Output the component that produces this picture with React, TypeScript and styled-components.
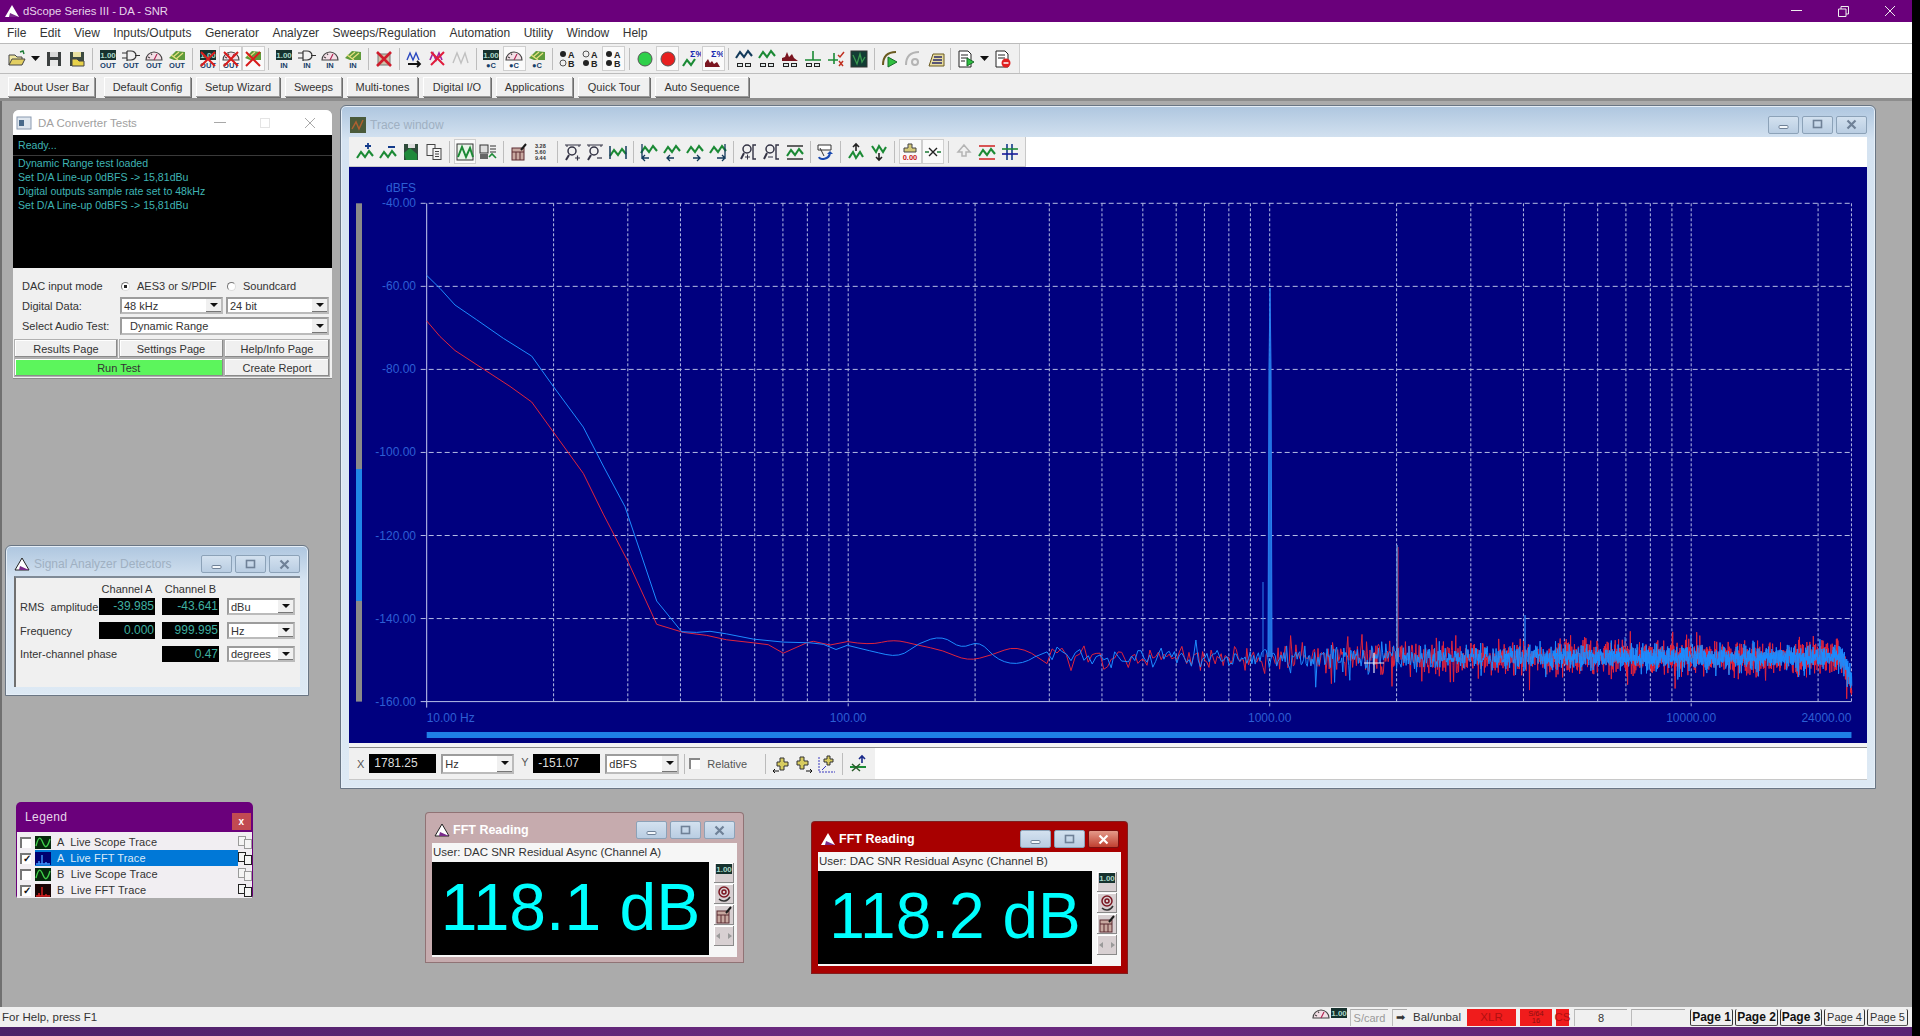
import React from "react";
import styled, { createGlobalStyle } from "styled-components";

const GlobalStyle = createGlobalStyle`
  html, body { margin: 0; padding: 0; background: #000; }
  body { font-family: "Liberation Sans", Arial, sans-serif; font-size: 12px; color: #222; }
  * { box-sizing: border-box; }
`;

const Screen = styled.div`
  width: 1912px;
  height: 1036px;
  display: flex;
  flex-direction: column;
  overflow: hidden;
`;

const TitleBar = styled.div`
  height: 22px;
  flex: none;
  background: #6a007b;
  color: #e6d4ea;
  display: flex;
  align-items: center;
  padding-left: 4px;
  gap: 3px;
  font-size: 11.3px;
`;

const TitleText = styled.span`
  flex: 1;
`;

const SysButton = styled.div`
  width: 44px;
  height: 22px;
  display: flex;
  align-items: center;
  justify-content: center;
`;

const MenuBar = styled.div`
  height: 22px;
  flex: none;
  background: #fff;
  border-bottom: 1px solid #bbb;
  display: flex;
  align-items: center;
  padding-left: 7px;
  gap: 13.5px;
  color: #333;
`;

const MainToolbarRow = styled.div`
  height: 30px;
  flex: none;
  background: #fff;
  border-bottom: 1px solid #bdbdbd;
  display: flex;
`;

const ToolGroup = styled.div<{ $pad: number }>`
  display: flex;
  align-items: center;
  height: 100%;
  background: #f0f0f0;
  padding: 0 4px 0 ${({ $pad }) => $pad}px;
  border-right: 1px solid #d0d0d0;
`;

const ToolButton = styled.div<{ $on?: boolean; $narrow?: boolean }>`
  width: ${({ $narrow }) => ($narrow ? 14 : 22.9)}px;
  height: 25px;
  flex: none;
  display: flex;
  align-items: center;
  justify-content: center;
  background: ${({ $on }) => ($on ? "#fafafa" : "transparent")};
  box-shadow: ${({ $on }) => ($on ? "inset 0 0 0 1px #cfcfcf" : "none")};
`;

const ToolSep = styled.div`
  width: 1px;
  height: 22px;
  margin: 0 3.5px;
  flex: none;
  background: #bdbdbd;
`;

const UserBar = styled.div`
  height: 27px;
  flex: none;
  background: #f0f0f0;
  border-bottom: 3px solid #8d8d8d;
  display: flex;
  align-items: center;
  padding: 2px 0 0 8px;
  gap: 5px;
`;

const UserButton = styled.div<{ $w: number }>`
  width: ${({ $w }) => $w}px;
  height: 20px;
  display: flex;
  align-items: center;
  justify-content: center;
  font-size: 11px;
  color: #333;
  background: #f0f0f0;
  box-shadow: inset -1px -1px #9a9a9a, inset 1px 1px #fff, 1px 1px 0 #6e6e6e;

  &:first-child {
    margin-right: 4px;
  }
`;

const Workspace = styled.div`
  position: relative;
  flex: 1;
  background: #ababab;
  box-shadow: inset 2px 0 #707070;
`;

const Desk = styled.div<{ $x: number; $y: number; $w: number; $h: number }>`
  position: absolute;
  left: ${({ $x }) => $x}px;
  top: ${({ $y }) => $y}px;
  width: ${({ $w }) => $w}px;
  height: ${({ $h }) => $h}px;
  display: flex;
  flex-direction: column;
`;

/* DA Converter Tests */
const FlatWindow = styled(Desk)`
  background: #f0f0f0;
  border-radius: 6px 6px 0 0;
  box-shadow: 0 1px 0 #8a8a8a;
`;

const FlatTitle = styled.div`
  height: 25px;
  flex: none;
  background: #fff;
  border-radius: 6px 6px 0 0;
  display: flex;
  align-items: center;
  padding-left: 3px;
  gap: 6px;
  color: #a0a0a0;
  font-size: 11.5px;
`;

const FlatControls = styled.div`
  margin-left: auto;
  display: flex;
  align-items: center;
  color: #a8a8a8;
`;

const FlatControl = styled.div`
  width: 45px;
  display: flex;
  justify-content: center;
`;

const Console = styled.div`
  height: 133px;
  flex: none;
  background: #000;
  color: #3fb4b4;
  font-size: 10.6px;
  line-height: 14px;
`;

const ConsoleStatus = styled.div`
  height: 21px;
  padding: 3px 5px 0;
  border-bottom: 1px solid #3a3a3a;
`;

const ConsoleLog = styled.div`
  padding: 0 5px;
`;

const FormBody = styled.div`
  padding: 10px 3px 0 2px;
  display: flex;
  flex-direction: column;
  font-size: 11px;
`;

const FormRow = styled.div<{ $h: number; $mb: number }>`
  height: ${({ $h }) => $h}px;
  margin-bottom: ${({ $mb }) => $mb}px;
  display: flex;
  align-items: center;
  padding-left: 7px;
  color: #333;
`;

const FormLabel = styled.div`
  width: 98px;
  flex: none;
`;

const RadioText = styled.span<{ $w: number }>`
  width: ${({ $w }) => $w}px;
  margin-left: 7px;
`;

const Radio = styled.span<{ $on?: boolean }>`
  width: 9px;
  height: 9px;
  margin-left: 1px;
  flex: none;
  border-radius: 50%;
  background: ${({ $on }) => ($on ? "radial-gradient(#222 0 30%, #fff 38%)" : "#fff")};
  border: 1px solid #777;
  border-right-color: #ddd;
  border-bottom-color: #ddd;
`;

const Select = styled.div<{ $w: number; $indent?: number }>`
  width: ${({ $w }) => $w}px;
  height: 100%;
  flex: none;
  background: #fff;
  border: 2px solid #9c9c9c;
  border-right-color: #bbb;
  border-bottom-color: #bbb;
  display: flex;
  align-items: center;
  justify-content: space-between;
  padding-left: ${({ $indent }) => $indent ?? 2}px;
  color: #333;
  font-size: 11px;
`;

const SecondSelect = styled(Select)`
  margin-left: 3px;
`;

const SelectArrow = styled.div`
  width: 15px;
  height: 100%;
  flex: none;
  background: #f0f0f0;
  border-bottom: 1px solid #777;
  display: flex;
  align-items: center;
  justify-content: center;

  &::after {
    content: "";
    border-left: 4px solid transparent;
    border-right: 4px solid transparent;
    border-top: 4px solid #111;
  }
`;

const ButtonGrid = styled.div`
  display: grid;
  grid-template-columns: 102px 103px 104px;
  grid-auto-rows: 17px;
  column-gap: 2.5px;
  row-gap: 2px;
`;

const FormButton = styled.div<{ $run?: boolean }>`
  display: flex;
  align-items: center;
  justify-content: center;
  grid-column: ${({ $run }) => ($run ? "span 2" : "auto")};
  font-size: 11px;
  color: #333;
  background: ${({ $run }) => ($run ? "#5cf55c" : "#f0f0f0")};
  box-shadow: inset -1px -1px #8a8a8a, inset 1px 1px #fff, 0 0 0 1px #b0b0b0;
`;

/* Aero style MDI windows */
const AeroWindow = styled(Desk)`
  background: linear-gradient(#aec6df 0, #d5e3f1 34px, #dde9f4 100%);
  border: 1px solid #6a7684;
  border-radius: 6px 6px 0 0;
  box-shadow: inset 0 0 0 1px #e6eff8;
`;

const AeroTitle = styled.div<{ $h: number; $pad: number }>`
  height: ${({ $h }) => $h}px;
  flex: none;
  display: flex;
  align-items: center;
  gap: 4px;
  color: #9fb0c2;
  font-size: 12px;
  padding: 6px 0 0 ${({ $pad }) => $pad}px;
`;

const CaptionButtons = styled.div`
  margin-left: auto;
  display: flex;
  gap: 3px;
  padding-right: 8px;
`;

const CaptionButton = styled.div<{ $red?: boolean }>`
  width: 31px;
  height: 18px;
  border: 1px solid ${({ $red }) => ($red ? "#7a1010" : "#8ca2b8")};
  border-radius: 2px;
  background: ${({ $red }) =>
    $red ? "linear-gradient(#e49a8a, #c04030)" : "linear-gradient(#d3e1ef, #b9cde2)"};
  display: flex;
  align-items: center;
  justify-content: center;
`;

const Inner = styled.div`
  background: #f0f0f0;
  margin: 0 8px;
  border-top: 2px solid #7f8a96;
  border-left: 2px solid #707070;
  height: 111px;
  padding: 2px 0 0 4px;
  font-size: 11px;
`;

const DetectorGrid = styled.div`
  display: grid;
  grid-template-columns: 79px 56px 7px 57px 8px 68px;
  grid-template-rows: 18px 17px 7px 17px 7px 16px;
  align-items: center;
  color: #333;
`;

const ColHead = styled.div<{ $col: number }>`
  grid-column: ${({ $col }) => $col};
  grid-row: 1;
  text-align: center;
`;

const RowLabel = styled.div<{ $row: number }>`
  grid-column: 1 / span 3;
  grid-row: ${({ $row }) => $row};
  white-space: pre;
`;

const Readout = styled.div<{ $col: number; $row: number }>`
  grid-column: ${({ $col }) => $col};
  grid-row: ${({ $row }) => $row};
  height: 100%;
  background: #000;
  color: #3fb0a0;
  text-align: right;
  line-height: 16px;
  padding-right: 1px;
  font-size: 12px;
`;

const GridSelect = styled(Select)<{ $row: number }>`
  grid-column: 6;
  grid-row: ${({ $row }) => $row};
`;

/* Legend */
const LegendWindow = styled(Desk)`
  background: #6a007b;
  border-radius: 5px 5px 3px 3px;
  padding: 0 1px 1px;
`;

const LegendTitle = styled.div`
  height: 30px;
  flex: none;
  display: flex;
  align-items: center;
  justify-content: space-between;
  padding: 0 1px 0 8px;
  color: #e6d6ea;
  font-size: 12px;
  letter-spacing: 0.4px;
`;

const LegendClose = styled.div`
  width: 19px;
  height: 17px;
  margin-top: 8px;
  background: #c14a52;
  color: #fff;
  display: flex;
  align-items: center;
  justify-content: center;
  font-size: 10px;
  font-weight: bold;
`;

const LegendBody = styled.div`
  flex: 1;
  background: #f1eef2;
  display: flex;
  flex-direction: column;
  padding-top: 2px;
`;

const LegendRow = styled.div`
  height: 16px;
  display: flex;
  align-items: center;
  padding-left: 3px;
`;

const LegendCheck = styled.div`
  width: 11px;
  height: 11px;
  flex: none;
  background: #fff;
  border-top: 2px solid #777;
  border-left: 2px solid #777;
  margin-right: 4px;
  display: flex;
  align-items: center;
  justify-content: center;
  font-size: 10px;
  line-height: 10px;
  font-weight: bold;
  color: #111;
`;

const LegendLabel = styled.div<{ $sel?: boolean }>`
  width: 203px;
  height: 16px;
  flex: none;
  display: flex;
  align-items: center;
  gap: 6px;
  white-space: pre;
  font-size: 11px;
  letter-spacing: 0.12px;
  color: ${({ $sel }) => ($sel ? "#dbe9f7" : "#333")};
  background: ${({ $sel }) => ($sel ? "#0078d7" : "transparent")};
`;

/* Trace window */
const TraceToolbar = styled.div`
  height: 30px;
  flex: none;
  margin: 0 8px;
  background: #fff;
  display: flex;
`;

const TraceTools = styled(ToolGroup)`
  border-right: 1px solid #c8c8c8;
  border-bottom: 1px solid #c8c8c8;
`;

const Plot = styled.div`
  height: 576px;
  flex: none;
  margin: 0 8px;
  background: #00007f;
`;

const PlotSvg = styled.svg`
  display: block;
  font-family: "Liberation Sans", Arial, sans-serif;
  font-size: 12px;
`;

const PlotFooter = styled.div`
  height: 37px;
  flex: none;
  margin: 0 8px;
  padding-top: 4px;
  background: #f4f4f4;
`;

const CursorBar = styled.div`
  height: 33px;
  background: #fff;
  border-top: 1px solid #8a8a8a;
  border-bottom: 1px solid #c8c8c8;
  display: flex;
`;

const CursorTools = styled.div`
  width: 526px;
  background: #f0f0f0;
  display: flex;
  align-items: center;
  padding-left: 8px;
  color: #555;
  font-size: 11px;
`;

const CursorValue = styled.div<{ $w: number }>`
  width: ${({ $w }) => $w}px;
  height: 19px;
  margin: 0 5px;
  flex: none;
  background: #000;
  color: #ddd;
  line-height: 19px;
  padding-left: 5px;
  font-size: 12px;
`;

const CursorSelect = styled(Select)`
  height: 20px;
`;

const CursorLetter = styled.span`
  width: 7px;
  margin-left: 7px;
  margin-top: -3px;
  flex: none;
`;

const CursorCheck = styled(LegendCheck)`
  margin: 0 7px 0 0;
  border-color: #888;
`;

const CursorSep = styled.div<{ $ml: number }>`
  width: 1px;
  height: 20px;
  flex: none;
  margin: 0 4px 0 ${({ $ml }) => $ml}px;
  background: #bbb;
`;

/* FFT readings */
const FftWindow = styled(Desk)<{ $frame: string }>`
  background: ${({ $frame }) => $frame};
  border: 1px solid rgba(90, 60, 60, 0.5);
  border-radius: 4px 4px 0 0;
  padding: 0 6px;
`;

const FftTitle = styled.div<{ $h: number }>`
  height: ${({ $h }) => $h}px;
  flex: none;
  display: flex;
  align-items: center;
  gap: 3px;
  color: #fff;
  font-size: 12.5px;
  font-weight: bold;
  padding: 4px 0 0 2px;
`;

const FftCaptions = styled(CaptionButtons)`
  padding-right: 2px;
`;

const FftBody = styled.div`
  background: #f6f6f6;
  display: flex;
  flex-direction: column;
  height: 114px;
`;

const FftHeader = styled.div`
  height: 19px;
  flex: none;
  font-size: 11.5px;
  line-height: 19px;
  padding-left: 1px;
  color: #333;
`;

const FftRow = styled.div`
  display: flex;
  gap: 5px;
`;

const FftDisplay = styled.div<{ $w: number; $size: number }>`
  width: ${({ $w }) => $w}px;
  height: 93px;
  flex: none;
  background: #000;
  color: #00ffff;
  display: flex;
  align-items: center;
  justify-content: center;
  padding-bottom: 4px;
  font-size: ${({ $size }) => $size}px;
`;

const FftSide = styled.div`
  width: 20px;
  display: flex;
  flex-direction: column;
  gap: 1px;
  padding-top: 1px;
`;

const FftSideButton = styled.div`
  height: 20px;
  background: #d8d0d2;
  box-shadow: inset -1px -1px #8a8a8a, inset 1px 1px #fff;
  display: flex;
  align-items: center;
  justify-content: center;
`;

/* Status bar */
const StatusBar = styled.div`
  height: 20px;
  flex: none;
  background: #f0f0f0;
  display: flex;
  align-items: center;
  padding: 0 4px 0 2px;
  color: #333;
  font-size: 11.5px;
`;

const StatusHelp = styled.div`
  margin-right: auto;
`;

const StatusCell = styled.div<{ $w: number; $ml?: number; $bg?: string; $fg?: string }>`
  width: ${({ $w }) => $w}px;
  height: 17px;
  margin-left: ${({ $ml }) => $ml ?? 3}px;
  flex: none;
  display: flex;
  align-items: center;
  justify-content: center;
  background: ${({ $bg }) => $bg ?? "transparent"};
  color: ${({ $fg }) => $fg ?? "#333"};
  white-space: nowrap;
`;

const StatusBox = styled(StatusCell)`
  border-top: 1px solid #aaa;
  border-left: 1px solid #bbb;
  font-size: 11px;
`;

const TinyAes = styled.div`
  font-size: 7.5px;
  line-height: 7px;
  text-align: center;
  color: #8a1010;
`;

const PageTab = styled.div<{ $w: number; $bold?: boolean }>`
  width: ${({ $w }) => $w}px;
  height: 17px;
  margin-left: 2px;
  flex: none;
  display: flex;
  align-items: center;
  justify-content: center;
  white-space: nowrap;
  font-size: ${({ $bold }) => ($bold ? 12 : 11)}px;
  font-weight: ${({ $bold }) => ($bold ? "bold" : "normal")};
  color: ${({ $bold }) => ($bold ? "#111" : "#333")};
  border-left: 1px solid #333;
  border-right: 1px solid #333;
  border-bottom: 1px solid #555;
  border-radius: 2px;

  &:nth-last-child(5) {
    margin-left: 5px;
  }
`;

const TaskStrip = styled.div`
  height: 9px;
  flex: none;
  background: linear-gradient(90deg, #4b2168, #6c2a80 45%, #5a2474);
`;

const IconSvg = styled.svg`
  display: block;
  flex: none;
`;

/* ---------- icons ---------- */

const green = "#1b8a35";
const waveD = "M2 13 6 7l4 5 4-6 4 5";
const Wave = ({ c = green, y = 0 }: { c?: string; y?: number }) => (
  <path d={waveD} transform={`translate(0 ${y})`} fill="none" stroke={c} strokeWidth="2.1" />
);
const Cross = () => <path d="M3 3 17 17M17 3 3 17" stroke="#d81c1c" strokeWidth="2" />;
const Boxes = () => (
  <g fill="#dfe8e8" stroke="#222" strokeWidth="1">
    <rect x="3.5" y="14.5" width="5" height="3" />
    <rect x="11.5" y="14.5" width="5" height="3" />
  </g>
);
const Plus = ({ c = "#123a8a", x = 13, y = 4 }: { c?: string; x?: number; y?: number }) => (
  <path d={`M${x - 3} ${y}h6M${x} ${y - 3}v6`} stroke={c} strokeWidth="1.8" />
);

const glyphs: Record<string, React.ReactNode> = {
  folder: (
    <g stroke="#444">
      <path d="M2 16V6h6l2 2h5v3" fill="#f0e7a0" />
      <path d="M2 16l3-6h13l-3 6z" fill="#e3cf62" />
      <path d="M13 3l3-1 1 3" fill="none" stroke="#1b7a35" strokeWidth="1.4" />
    </g>
  ),
  save: (
    <g>
      <rect x="3" y="3" width="14" height="14" fill="#3c4040" />
      <rect x="6" y="3" width="8" height="5" fill="#d8d8d8" />
      <rect x="6" y="11" width="8" height="6" fill="#e8e8e8" />
    </g>
  ),
  saveAs: (
    <g>
      <rect x="3" y="3" width="14" height="14" fill="#3c4a40" />
      <rect x="6" y="3" width="8" height="5" fill="#e8e0a0" />
      <path d="M5 17V10h5l2 2h5v5z" fill="#e8d24a" stroke="#444" />
    </g>
  ),
  meter: (
    <g>
      <rect x="2" y="1" width="16" height="10" fill="#16322e" />
      <text x="10" y="9" fontSize="8" fontWeight="bold" textAnchor="middle" fill="#a9d8c8" fontFamily="Liberation Sans">1.00</text>
    </g>
  ),
  sw: (
    <g fill="none" stroke="#333" strokeWidth="1.2">
      <path d="M1 4h5M1 9h5M14 6.5h5M6 2v10M6 2h4a5 4.5 0 0 1 0 9H6" />
    </g>
  ),
  gauge: (
    <g stroke="#444" strokeWidth="1.1">
      <path d="M2 11a8 8 0 0 1 16 0z" fill="#f3dfe6" />
      <path d="M10 11l3-6" stroke="#b02050" />
      <path d="M4 8l2 1M7 4.5l1 1.5" />
    </g>
  ),
  chip: (
    <g>
      <path d="M2 9 9 2l9 1v8H7z" fill="#5f9a3a" />
      <path d="M6 8l6-5M9 10l7-6M4 6l7 5" stroke="#e8e080" strokeWidth="1.2" />
    </g>
  ),
  bigX: (
    <g>
      <path d="M4 5h12v11H4z" fill="#cfc0a8" stroke="#777" />
      <path d="M3 3 17 17M17 3 3 17" stroke="#d01c2c" strokeWidth="2.6" />
    </g>
  ),
  scan: (
    <g fill="none" strokeWidth="1.4">
      <path d="M2 11 5 4l3 7 3-7 3 7" stroke="#2a48c0" />
      <path d="M3 15h12m-3-3 3 3-3 3" stroke="#111" strokeWidth="1.8" />
    </g>
  ),
  scanX: (
    <g fill="none" strokeWidth="1.6">
      <path d="M2 11 5 4l3 7 3-7 3 7" stroke="#a020a0" />
      <path d="M3 3l13 13M16 3 3 16" stroke="#e01c3c" strokeWidth="2" />
    </g>
  ),
  scanOff: <path d="M2 14 6 4l4 10 4-10 3 10" fill="none" stroke="#c0c0c0" strokeWidth="1.4" />,
  ab1: (
    <g fontSize="9" fontWeight="bold" fontFamily="Liberation Sans" fill="#222">
      <circle cx="5" cy="5" r="3" fill="#222" />
      <circle cx="5" cy="14" r="3" fill="none" stroke="#555" />
      <text x="10" y="9">A</text>
      <text x="10" y="18">B</text>
    </g>
  ),
  ab2: (
    <g fontSize="9" fontWeight="bold" fontFamily="Liberation Sans" fill="#222">
      <circle cx="5" cy="5" r="3" fill="none" stroke="#555" />
      <circle cx="5" cy="14" r="3" fill="#222" />
      <text x="10" y="9">A</text>
      <text x="10" y="18">B</text>
    </g>
  ),
  ab3: (
    <g fontSize="9" fontWeight="bold" fontFamily="Liberation Sans" fill="#222">
      <circle cx="5" cy="5" r="3" fill="#222" />
      <circle cx="5" cy="14" r="3" fill="#222" />
      <text x="10" y="9">A</text>
      <text x="10" y="18">B</text>
    </g>
  ),
  dotGreen: <circle cx="10" cy="10" r="7" fill="#2fd04a" stroke="#555" />,
  dotRed: <circle cx="10" cy="10" r="7" fill="#e82020" stroke="#555" />,
  sigWave: (
    <g>
      <path d="M2 17 6 11l4 5 4-6" fill="none" stroke={green} strokeWidth="2.2" />
      <text x="9" y="8" fontSize="9" fontWeight="bold" fill="#1a2ab0" fontFamily="Liberation Sans">Σ%</text>
    </g>
  ),
  sigSpec: (
    <g>
      <path d="M2 18V14l3-4 2 4 2-2 2 3 3-2 3 5z" fill="#7a1520" />
      <text x="8" y="8" fontSize="9" fontWeight="bold" fill="#1a2ab0" fontFamily="Liberation Sans">Σ%</text>
    </g>
  ),
  waveBox: (
    <g>
      <Wave c="#123a5a" y={-4} />
      <Boxes />
    </g>
  ),
  waveBoxG: (
    <g>
      <Wave y={-4} />
      <Boxes />
    </g>
  ),
  specBox: (
    <g>
      <path d="M2 12V9l3-1 2-5 2 5 3-3 2 4 4 3z" fill="#7a1520" />
      <Boxes />
    </g>
  ),
  spikeBox: (
    <g>
      <path d="M2 11h16M10 11V2" stroke={green} strokeWidth="1.6" />
      <Boxes />
    </g>
  ),
  spikeX: (
    <g>
      <path d="M2 11h10M8 15V4" stroke={green} strokeWidth="1.6" />
      <path d="M12 6l2 2 4-5" fill="none" stroke="#c03020" strokeWidth="1.5" />
      <path d="M13 12l4 5M17 12l-4 5" stroke="#c03020" strokeWidth="1.5" />
    </g>
  ),
  scope: (
    <g>
      <rect x="2" y="2" width="16" height="16" fill="#123c34" stroke="#333" />
      <path d="M4 6l4 9 3-10 2 8 3-5" fill="none" stroke="#3a9a50" strokeWidth="1.3" />
    </g>
  ),
  play: (
    <g>
      <path d="M3 16C3 7 7 3 16 3" fill="none" stroke="#6a5a20" strokeWidth="2" />
      <path d="M8 8l9 5-9 5z" fill="#30c040" stroke="#1a6a2a" />
    </g>
  ),
  playOff: (
    <g fill="none" stroke="#b4b4b4" strokeWidth="2">
      <path d="M3 16C3 7 7 3 16 3" />
      <circle cx="12" cy="13" r="3" />
    </g>
  ),
  list: (
    <g>
      <path d="M3 17 7 5h11v12z" fill="#e8dca0" stroke="#6a5a20" />
      <path d="M8 8h8M7 11h9M6 14h10" stroke="#2a2a6a" strokeWidth="1.6" />
    </g>
  ),
  docPlay: (
    <g>
      <path d="M3 2h9l3 3v13H3z" fill="#fff" stroke="#222" />
      <path d="M5 6h7M5 9h7M5 12h4" stroke="#222" />
      <path d="M11 9l7 4-7 4z" fill="#2fc040" stroke="#1a6a2a" />
    </g>
  ),
  docStop: (
    <g>
      <path d="M3 2h9l3 3v13H3z" fill="#fff" stroke="#222" />
      <path d="M5 6h7M5 9h7" stroke="#222" />
      <circle cx="13" cy="14" r="4.5" fill="#e02020" />
      <path d="M10.5 14h5" stroke="#fff" strokeWidth="1.5" />
    </g>
  ),
  wavePlus: (
    <g>
      <Wave y={3} />
      <Plus />
    </g>
  ),
  waveMinus: (
    <g>
      <Wave y={3} />
      <path d="M10 5h7" stroke="#123a8a" strokeWidth="2" />
    </g>
  ),
  saveHome: (
    <g>
      <rect x="3" y="2" width="14" height="16" fill="#2f4a3a" />
      <path d="M3 11l6-5 7 6v6H5z" fill="#1f8a3a" />
      <rect x="7" y="2" width="7" height="4" fill="#ddd" />
    </g>
  ),
  copy: (
    <g fill="#f4f4f4" stroke="#444">
      <rect x="3" y="2.5" width="8" height="11" />
      <rect x="9" y="6.5" width="8" height="11" />
      <path d="M11 9.5h4M11 12h4M11 14.5h4" />
    </g>
  ),
  tile: (
    <g>
      <rect x="2" y="2" width="16" height="16" fill="#e8f4e8" stroke="#333" />
      <path d="M3 15 7 5l4 10 4-9 3 9" fill="none" stroke={green} strokeWidth="2" />
    </g>
  ),
  printer: (
    <g>
      <rect x="2" y="3" width="8" height="8" fill="#ddd" stroke="#333" />
      <rect x="2" y="12" width="8" height="5" fill="#666" />
      <path d="M12 4h6M12 7h6M12 10h6" stroke="#333" />
      <path d="M11 15l3-3 4 4" fill="none" stroke={green} strokeWidth="1.6" />
    </g>
  ),
  note: (
    <g>
      <rect x="3" y="6" width="12" height="12" fill="#c8a8a0" stroke="#5a2a30" />
      <path d="M3 10h12M7 10v8M11 10v8" stroke="#5a2a30" />
      <path d="M12 8l5-6" stroke="#1a1a1a" strokeWidth="2" />
    </g>
  ),
  numbers: (
    <g fontSize="5.5" fontFamily="Liberation Sans" fill="#333" fontWeight="bold">
      <text x="3" y="6">3.28</text>
      <text x="3" y="12">5.60</text>
      <text x="3" y="18">9.44</text>
    </g>
  ),
  zoomIn: (
    <g fill="none" stroke="#334">
      <path d="M2 3h16M4 3v2M16 3v2" />
      <circle cx="9" cy="9" r="4" strokeWidth="1.5" />
      <path d="M6 13l-3 5" strokeWidth="2" />
      <path d="M12 16h5M14.5 13.5v5" strokeWidth="1.2" />
    </g>
  ),
  zoomOut: (
    <g fill="none" stroke="#334">
      <path d="M2 3h16M4 3v2M16 3v2" />
      <circle cx="9" cy="9" r="4" strokeWidth="1.5" />
      <path d="M6 13l-3 5" strokeWidth="2" />
      <path d="M12 16h5" strokeWidth="1.2" />
    </g>
  ),
  waveFit: (
    <g>
      <Wave y={1} />
      <path d="M2 4v13M18 4v13" stroke="#123a5a" strokeWidth="1.5" />
    </g>
  ),
  waveL: (
    <g>
      <Wave y={-2} />
      <path d="M3 2v15M3 16h7M6 13l-3 3 3 3" fill="none" stroke="#123a5a" strokeWidth="1.3" />
    </g>
  ),
  waveD2: (
    <g>
      <Wave y={-2} />
      <path d="M5 16h7M8 13l-3 3 3 3" fill="none" stroke="#123a5a" strokeWidth="1.3" />
    </g>
  ),
  waveR: (
    <g>
      <Wave y={-2} />
      <path d="M8 16h7M12 13l3 3-3 3" fill="none" stroke="#123a5a" strokeWidth="1.3" />
    </g>
  ),
  waveRb: (
    <g>
      <Wave y={-2} />
      <path d="M17 2v15M9 16h7M14 13l3 3-3 3" fill="none" stroke="#123a5a" strokeWidth="1.3" />
    </g>
  ),
  searchL: (
    <g fill="none" stroke="#334">
      <circle cx="8" cy="7" r="4" strokeWidth="1.5" />
      <path d="M5 11l-3 6" strokeWidth="2" />
      <path d="M17 3h-3v14h3" strokeWidth="1.4" />
      <path d="M6 15h5M8.5 12.5v5" />
    </g>
  ),
  searchM: (
    <g fill="none" stroke="#334">
      <circle cx="8" cy="7" r="4" strokeWidth="1.5" />
      <path d="M5 11l-3 6" strokeWidth="2" />
      <path d="M17 3h-3v14h3" strokeWidth="1.4" />
      <path d="M6 15h5" />
    </g>
  ),
  waveBar: (
    <g>
      <path d="M2 4h16M2 17h16" stroke="#333" strokeWidth="1.4" />
      <Wave y={1} />
    </g>
  ),
  autoscale: (
    <g>
      <path d="M3 3h13v5H3z" fill="#fff" stroke="#333" />
      <path d="M4 15c1 3 10 3 11-4" fill="none" stroke="#1a4ab0" strokeWidth="2" />
      <path d="M12 12l3-3 3 3" fill="#1a4ab0" />
      <path d="M5 6l4 8" stroke="#333" />
    </g>
  ),
  peakUp: (
    <g>
      <path d="M3 16l4-6 3 6 4-6 3 5" fill="none" stroke={green} strokeWidth="2.1" />
      <path d="M10 9V2m-3 3 3-3 3 3" fill="none" stroke="#222" strokeWidth="1.6" />
    </g>
  ),
  peakDown: (
    <g>
      <path d="M3 4l4 6 3-6 4 6 3-5" fill="none" stroke={green} strokeWidth="2.1" />
      <path d="M10 11v7m-3-3 3 3 3-3" fill="none" stroke="#222" strokeWidth="1.6" />
    </g>
  ),
  cursorZero: (
    <g>
      <path d="M8 2h4v4h4v4H4V6h4z" fill="#d4c878" stroke="#444" />
      <text x="10" y="18" fontSize="7.5" fontWeight="bold" textAnchor="middle" fill="#c82020" fontFamily="Liberation Sans">0.00</text>
    </g>
  ),
  cursorX: (
    <g stroke="#222" strokeWidth="1.4" fill="none">
      <path d="M6 6l8 8M14 6l-8 8" />
      <path d="M2 10h4M14 10h4" stroke="#1b7a35" />
    </g>
  ),
  ghostUp: <path d="M10 3l6 7h-4v4H8v-4H4z" fill="none" stroke="#b4b4b4" strokeWidth="1.5" />,
  redBars: (
    <g>
      <path d="M2 4h16M2 17h16" stroke="#d02020" strokeWidth="1.6" />
      <Wave y={1} />
    </g>
  ),
  stems: (
    <g stroke="#123a8a" strokeWidth="1.6">
      <path d="M7 2v16M12 2v16" />
      <path d="M2 7h16" stroke={green} />
      <path d="M2 12h16" stroke="#1a1a9a" />
    </g>
  ),
  crossL: (
    <g>
      <path d="M8 4h4v4h4v4h-4v4H8v-4H5V8h3z" fill="#d8cc60" stroke="#333" />
      <path d="M1 17h6m-4-2-2 2 2 2" fill="none" stroke="#111" />
    </g>
  ),
  crossR: (
    <g>
      <path d="M6 3h4v4h4v4h-4v4H6v-4H3V7h3z" fill="#d8cc60" stroke="#333" />
      <path d="M12 17h6m-2-2 2 2-2 2" fill="none" stroke="#111" />
    </g>
  ),
  crossB: (
    <g>
      <path d="M2 3v15h16" fill="none" stroke="#3a3ac0" strokeDasharray="2 1" />
      <path d="M10 2h3v3h3v3h-3v3h-3V8H7V5h3z" fill="#d8cc60" stroke="#333" />
      <path d="M9 12l-4 4" stroke="#3a3ac0" />
    </g>
  ),
  crossUp: (
    <g>
      <path d="M2 13h16" stroke={green} strokeWidth="2" />
      <path d="M4 10l8 7M12 10l-8 7" stroke="#2a5a2a" strokeWidth="1.5" />
      <path d="M14 9V2m-3 3 3-3 3 3" fill="none" stroke="#1a2a8a" strokeWidth="1.6" />
    </g>
  ),
  target: (
    <g fill="none" stroke="#7a1520" strokeWidth="1.5">
      <circle cx="10" cy="8" r="5" />
      <circle cx="10" cy="8" r="2" />
      <path d="M5 15c3 3 8 3 11-2" stroke="#333" />
    </g>
  ),
  arrowsFaded: <path d="M2 10l4-3v6zM18 10l-4-3v6z" fill="#9a9a9a" />,
};

const Icon = ({ kind, label, cross }: { kind: string; label?: string; cross?: boolean }) => (
  <IconSvg width="20" height="20" viewBox="0 0 20 20">
    {glyphs[kind]}
    {label && (
      <text x="10" y="19" fontSize="7.5" fontWeight="bold" textAnchor="middle" fill="#16406a" fontFamily="Liberation Sans">
        {label}
      </text>
    )}
    {cross && <Cross />}
  </IconSvg>
);

const Caret = () => (
  <svg width="9" height="5" viewBox="0 0 9 5">
    <path d="M0 0h9L4.5 5z" fill="#111" />
  </svg>
);

const DsIcon = ({ light }: { light?: boolean }) => (
  <svg width="16" height="14" viewBox="0 0 16 14">
    <path d="M8 1l7 12H1z" fill="#fff" stroke={light ? "none" : "#222"} />
    <path d="M6 9l9 4H5z" fill="#7a2a8a" />
  </svg>
);

type Tool = { k: string; l?: string; x?: boolean; on?: boolean } | "|" | "caret";

const mainTools: Tool[] = [
  { k: "folder" }, "caret", { k: "save" }, { k: "saveAs" }, "|",
  { k: "meter", l: "OUT" }, { k: "sw", l: "OUT" }, { k: "gauge", l: "OUT" }, { k: "chip", l: "OUT" }, "|",
  { k: "meter", l: "OUT", x: true }, { k: "gauge", l: "OUT", x: true, on: true }, { k: "chip", l: "", x: true, on: true }, "|",
  { k: "meter", l: "IN" }, { k: "sw", l: "IN" }, { k: "gauge", l: "IN" }, { k: "chip", l: "IN" }, "|",
  { k: "bigX" }, "|",
  { k: "scan" }, { k: "scanX" }, { k: "scanOff" }, "|",
  { k: "meter", l: "●C" }, { k: "gauge", l: "●C", on: true }, { k: "chip", l: "●C" }, "|",
  { k: "ab1" }, { k: "ab2" }, { k: "ab3", on: true }, "|",
  { k: "dotGreen" }, { k: "dotRed", on: true }, { k: "sigWave" }, { k: "sigSpec", on: true }, "|",
  { k: "waveBox" }, { k: "waveBoxG" }, { k: "specBox" }, { k: "spikeBox" }, { k: "spikeX" }, { k: "scope" }, "|",
  { k: "play" }, { k: "playOff" }, { k: "list" }, "|",
  { k: "docPlay" }, "caret", { k: "docStop" },
];

const traceTools: Tool[] = [
  { k: "wavePlus" }, { k: "waveMinus" }, { k: "saveHome" }, { k: "copy" }, "|",
  { k: "tile", on: true }, { k: "printer" }, "|",
  { k: "note" }, { k: "numbers" }, "|",
  { k: "zoomIn" }, { k: "zoomOut" }, { k: "waveFit" }, "|",
  { k: "waveL" }, { k: "waveD2" }, { k: "waveR" }, { k: "waveRb" }, "|",
  { k: "searchL" }, { k: "searchM" }, { k: "waveBar" }, "|",
  { k: "autoscale" }, "|",
  { k: "peakUp" }, { k: "peakDown" }, "|",
  { k: "cursorZero", on: true }, { k: "cursorX", on: true }, "|",
  { k: "ghostUp" }, { k: "redBars" }, { k: "stems" },
];

const ToolStrip = ({ tools }: { tools: Tool[] }) => (
  <>
    {tools.map((t, i) => {
      if (t === "|") return <ToolSep key={i} />;
      if (t === "caret")
        return (
          <ToolButton key={i} $narrow>
            <Caret />
          </ToolButton>
        );
      return (
        <ToolButton key={i} $on={t.on}>
          <Icon kind={t.k} label={t.l} cross={t.x} />
        </ToolButton>
      );
    })}
  </>
);

const CaptionGlyph = ({ type, color = "#6f8197" }: { type: "min" | "max" | "close"; color?: string }) => (
  <svg width="13" height="11" viewBox="0 0 13 11">
    {type === "min" && <rect x="2" y="6.5" width="9" height="3" rx="1" fill="#f4f8fc" stroke={color} />}
    {type === "max" && <rect x="2.5" y="1.5" width="8" height="7" fill="none" stroke={color} strokeWidth="1.6" />}
    {type === "close" && <path d="M2.5 1.5l8 8M10.5 1.5l-8 8" stroke={color} strokeWidth="2.2" />}
  </svg>
);

const Captions = ({ red }: { red?: boolean }) => (
  <>
    <CaptionButton>
      <CaptionGlyph type="min" />
    </CaptionButton>
    <CaptionButton>
      <CaptionGlyph type="max" />
    </CaptionButton>
    <CaptionButton $red={red}>
      <CaptionGlyph type="close" color={red ? "#fff" : "#6f8197"} />
    </CaptionButton>
  </>
);

/* ---------- chart data (page pixel coords, shifted to the plot's origin) ---------- */

const OX = 349;
const OY = 167;
const xOf = (f: number) => 426.7 - OX + 421.5 * Math.log10(f / 10);
const yOf = (db: number) => 203.3 - OY + ((-40 - db) / 120) * 498.3;

const zoomPt = ([x, y]: number[]) => [350 + x / 3 - OX, 170 + y / 2.703 - OY];
const mainPt = ([x, y]: number[]) => [x * 1.2245 - OX, y * 1.2245 - OY];

const blueLow = [[230, 285], [270, 320], [315, 365], [380, 405], [460, 455], [545, 503], [610, 585], [700, 695], [760, 800], [825, 910], [870, 1030], [920, 1165], [995, 1248], [1040, 1250], [1080, 1247], [1130, 1254], [1210, 1268], [1300, 1276], [1380, 1278], [1420, 1282], [1458, 1296]].map(zoomPt);
const redLow = [[230, 408], [270, 450], [315, 488], [400, 538], [480, 585], [545, 627], [610, 708], [700, 820], [760, 930], [835, 1060], [920, 1228], [1000, 1250], [1070, 1258], [1130, 1270], [1210, 1278], [1255, 1283], [1300, 1306], [1370, 1278], [1390, 1274], [1440, 1284]].map(zoomPt);
const blueMid = [[692, 527], [712, 532], [735, 537], [750, 525], [770, 519], [785, 530], [800, 523], [815, 540], [835, 543], [855, 530]].map(mainPt);
const redMid = [[692, 524], [710, 527], [730, 522], [750, 527], [770, 531], [790, 540], [810, 535], [830, 527], [855, 540]].map(mainPt);

const poly = (pts: number[][]) => "M" + pts.map((p) => `${p[0].toFixed(1)} ${p[1].toFixed(1)}`).join("L");

const smooth = (pts: number[][]) => {
  let d = `M${pts[0][0].toFixed(1)} ${pts[0][1].toFixed(1)}`;
  for (let i = 1; i < pts.length - 1; i++) {
    const mx = (pts[i][0] + pts[i + 1][0]) / 2;
    const my = (pts[i][1] + pts[i + 1][1]) / 2;
    d += `Q${pts[i][0].toFixed(1)} ${pts[i][1].toFixed(1)} ${mx.toFixed(1)} ${my.toFixed(1)}`;
  }
  return d;
};

const seeded = (seed: number) => () => {
  seed = (seed + 0x6d2b79f5) | 0;
  let t = Math.imul(seed ^ (seed >>> 15), 1 | seed);
  t = (t + Math.imul(t ^ (t >>> 7), 61 | t)) ^ t;
  return ((t ^ (t >>> 14)) >>> 0) / 4294967296;
};

// noise floor from about 290 Hz up to 24 kHz, denser as the bins crowd together
const noiseFloor = (seed: number, sd: number, startX: number, tail: number) => {
  const r = seeded(seed);
  const gauss = () => Math.sqrt(-2 * Math.log(r() + 1e-6)) * Math.cos(6.2832 * r());
  const pts: number[][] = [];
  let x = startX;
  while (x < 1852) {
    const f = 10 * Math.pow(10, (x - 426.7) / 421.5);
    let y = 657 + gauss() * sd * (x < 1270 ? 0.75 : x < 1600 ? 1 : 0.9);
    if (r() < 0.05) y += Math.abs(gauss()) * 12;
    if (x > 1836) y += Math.pow((x - 1836) / 16, 2) * tail;
    pts.push([x - OX, y - OY]);
    x += Math.max(0.22, 1500 / f);
  }
  return poly(pts);
};

const join = (...parts: string[]) => parts.map((p, i) => (i ? "L" + p.slice(1) : p)).join("");

const bluePath = join(poly(blueLow), smooth(blueMid), noiseFloor(11, 6, 1047, 22));
const redPath = join(poly(redLow), smooth(redMid), noiseFloor(29, 8.5, 1047, 30));

const gridFreqs: number[] = [];
[10, 100, 1000, 10000].forEach((d) => {
  for (let m = 1; m < 10; m++) if (d * m > 10 && d * m <= 24000) gridFreqs.push(d * m);
});
gridFreqs.push(24000);

const dbLines = [-40, -60, -80, -100, -120, -140];
const gridColor = "#b4bce4";
const labelColor = "#2c5fd4";

const Spectrum = () => (
  <PlotSvg width="1518" height="576" viewBox="0 0 1518 576">
    <rect x="7" y={yOf(-40)} width="6" height={yOf(-160) - yOf(-40)} fill="#8a8a8a" />
    <rect x="7" y="302" width="6" height="132" fill="#1f86e8" />
    {dbLines.map((db) => (
      <line key={db} x1={xOf(10) - 6} x2={xOf(24000)} y1={yOf(db)} y2={yOf(db)} stroke={gridColor} strokeDasharray="5 3" />
    ))}
    {gridFreqs.map((f) => (
      <line key={f} x1={xOf(f)} x2={xOf(f)} y1={yOf(-40)} y2={yOf(-160) + ([100, 1000, 10000].includes(f) ? 6 : 0)} stroke={gridColor} strokeDasharray="3 2" />
    ))}
    <line x1={xOf(10)} x2={xOf(10)} y1={yOf(-40)} y2={yOf(-160) + 6} stroke="#c8cef0" />
    <line x1={xOf(10) - 6} x2={xOf(24000)} y1={yOf(-160)} y2={yOf(-160)} stroke="#b8bfe8" />

    <text x="67" y="25" textAnchor="end" fill={labelColor}>dBFS</text>
    {[...dbLines, -160].map((db) => (
      <text key={db} x="67" y={yOf(db) + 4} textAnchor="end" fill={labelColor}>
        {db.toFixed(2)}
      </text>
    ))}
    <text x={xOf(10)} y="555" fill={labelColor}>10.00 Hz</text>
    <text x={xOf(100)} y="555" textAnchor="middle" fill={labelColor}>100.00</text>
    <text x={xOf(1000)} y="555" textAnchor="middle" fill={labelColor}>1000.00</text>
    <text x={xOf(10000)} y="555" textAnchor="middle" fill={labelColor}>10000.00</text>
    <text x={xOf(24000)} y="555" textAnchor="end" fill={labelColor}>24000.00</text>
    <rect x={xOf(10)} y="565" width={xOf(24000) - xOf(10)} height="6" fill="#1f7fe6" />

    <path d={redPath} fill="none" stroke="#e0243c" strokeWidth="1" />
    <path d="M1049 495V380M921 490V300" stroke="#d8243c" fill="none" />
    <path d={bluePath} fill="none" stroke="#1c8cff" strokeWidth="1" />
    <path d="M919 490 920 200 921 121 922 200 923 490" stroke="#2a80f0" fill="#1f70e0" />
    <path d="M914 490V415" stroke="#2a80f0" />
    <path d="M1048 495V378" stroke="#5f90d8" strokeWidth="1.4" />
    <path d="M1176 490V448" stroke="#2a80f0" strokeWidth="1.4" />
    <path d="M1276 480V470M1342 480V468" stroke="#3f8af0" />

    <path d="M1015 496h20M1025 486v20" stroke="#e8e8f4" strokeWidth="1.2" />
  </PlotSvg>
);

const LegendIcon = ({ bg, c, d }: { bg: string; c: string; d: string }) => (
  <IconSvg width="16" height="13" viewBox="0 0 16 13">
    <rect x="0" y="0" width="16" height="13" fill={bg} />
    <path d={d} fill="none" stroke={c} strokeWidth="1.4" />
  </IconSvg>
);

const sine = "M1 10C4 -2 6 2 8 7s4 6 7-4";
const spike = "M1 12H15M7 12V3M4 12V9M11 12V10";

const legendRows = [
  { t: "A  Live Scope Trace", bg: "#06280c", c: "#3fd04a", d: sine, on: false, sel: false },
  { t: "A  Live FFT Trace", bg: "#000070", c: "#3f9aff", d: spike, on: true, sel: true },
  { t: "B  Live Scope Trace", bg: "#06280c", c: "#3fd04a", d: sine, on: false, sel: false },
  { t: "B  Live FFT Trace", bg: "#180404", c: "#e02020", d: spike, on: true, sel: false },
];

const DocPair = ({ dim }: { dim: boolean }) => (
  <IconSvg width="14" height="14" viewBox="0 0 14 14">
    <g fill="#f4f4f4" stroke={dim ? "#9a9a9a" : "#222"}>
      <rect x="0.5" y="1.5" width="7" height="9" />
      <rect x="6.5" y="4.5" width="7" height="9" />
    </g>
  </IconSvg>
);

const fftSide = ["meter", "target", "note", "arrowsFaded"];

const FftReading = ({ x, y, w, h, frame, channel, value, dispW, size, titleH, red }: {
  x: number; y: number; w: number; h: number; frame: string; channel: string; value: string;
  dispW: number; size: number; titleH: number; red?: boolean;
}) => (
  <FftWindow $x={x} $y={y} $w={w} $h={h} $frame={frame}>
    <FftTitle $h={titleH}>
      <DsIcon light={red} />
      FFT Reading
      <FftCaptions>
        <Captions red={red} />
      </FftCaptions>
    </FftTitle>
    <FftBody>
      <FftHeader>User: DAC SNR Residual Async (Channel {channel})</FftHeader>
      <FftRow>
        <FftDisplay $w={dispW} $size={size}>{value}</FftDisplay>
        <FftSide>
          {fftSide.map((k) => (
            <FftSideButton key={k}>
              <Icon kind={k} />
            </FftSideButton>
          ))}
        </FftSide>
      </FftRow>
    </FftBody>
  </FftWindow>
);

const menus = ["File", "Edit", "View", "Inputs/Outputs", "Generator", "Analyzer", "Sweeps/Regulation", "Automation", "Utility", "Window", "Help"];
const userButtons: [string, number][] = [
  ["About User Bar", 87], ["Default Config", 87], ["Setup Wizard", 84], ["Sweeps", 57], ["Multi-tones", 71],
  ["Digital I/O", 68], ["Applications", 77], ["Quick Tour", 72], ["Auto Sequence", 94],
];

export default function App() {
  return (
    <>
      <GlobalStyle />
      <Screen>
        <TitleBar>
          <DsIcon light />
          <TitleText>dScope Series III - DA - SNR</TitleText>
          <SysButton>
            <svg width="11" height="2"><rect width="11" height="1" fill="#eee" /></svg>
          </SysButton>
          <SysButton>
            <svg width="11" height="11" fill="none" stroke="#eee"><path d="M.5 3h7.5v7.5H.5zM3 3V.5h7.5V8H8" /></svg>
          </SysButton>
          <SysButton>
            <svg width="12" height="12" stroke="#eee"><path d="M1 1l10 10M11 1 1 11" /></svg>
          </SysButton>
        </TitleBar>
        <MenuBar>
          {menus.map((m) => (
            <span key={m}>{m}</span>
          ))}
        </MenuBar>
        <MainToolbarRow>
          <ToolGroup $pad={6}>
            <ToolStrip tools={mainTools} />
          </ToolGroup>
        </MainToolbarRow>
        <UserBar>
          {userButtons.map(([t, w]) => (
            <UserButton key={t} $w={w}>{t}</UserButton>
          ))}
        </UserBar>

        <Workspace>
          <FlatWindow $x={13} $y={9} $w={319} $h={268}>
            <FlatTitle>
              <svg width="16" height="14" viewBox="0 0 16 14">
                <rect x="1" y="1" width="14" height="12" fill="#dfe6ee" stroke="#8a9ab0" />
                <rect x="3" y="4" width="5" height="6" fill="#4a6a8a" />
              </svg>
              DA Converter Tests
              <FlatControls>
                <FlatControl>
                  <svg width="12" height="2"><rect width="12" height="1" fill="#a8a8a8" /></svg>
                </FlatControl>
                <FlatControl>
                  <svg width="10" height="10" fill="none" stroke="#e4e4e4"><rect x=".5" y=".5" width="9" height="9" /></svg>
                </FlatControl>
                <FlatControl>
                  <svg width="12" height="12" stroke="#a8a8a8"><path d="M1 1l10 10M11 1 1 11" /></svg>
                </FlatControl>
              </FlatControls>
            </FlatTitle>
            <Console>
              <ConsoleStatus>Ready...</ConsoleStatus>
              <ConsoleLog>
                <div>Dynamic Range test loaded</div>
                <div>Set D/A Line-up 0dBFS -&gt; 15,81dBu</div>
                <div>Digital outputs sample rate set to 48kHz</div>
                <div>Set D/A Line-up 0dBFS -&gt; 15,81dBu</div>
              </ConsoleLog>
            </Console>
            <FormBody>
              <FormRow $h={16} $mb={3}>
                <FormLabel>DAC input mode</FormLabel>
                <Radio $on />
                <RadioText $w={89}>AES3 or S/PDIF</RadioText>
                <Radio />
                <RadioText $w={70}>Soundcard</RadioText>
              </FormRow>
              <FormRow $h={17} $mb={3}>
                <FormLabel>Digital Data:</FormLabel>
                <Select $w={103}>48 kHz<SelectArrow /></Select>
                <SecondSelect $w={103}>24 bit<SelectArrow /></SecondSelect>
              </FormRow>
              <FormRow $h={18} $mb={5}>
                <FormLabel>Select Audio Test:</FormLabel>
                <Select $w={209} $indent={8}>Dynamic Range<SelectArrow /></Select>
              </FormRow>
              <ButtonGrid>
                <FormButton>Results Page</FormButton>
                <FormButton>Settings Page</FormButton>
                <FormButton>Help/Info Page</FormButton>
                <FormButton $run>Run Test</FormButton>
                <FormButton>Create Report</FormButton>
              </ButtonGrid>
            </FormBody>
          </FlatWindow>

          <AeroWindow $x={5} $y={444} $w={304} $h={151}>
            <AeroTitle $h={30} $pad={8}>
              <DsIcon />
              Signal Analyzer Detectors
              <CaptionButtons>
                <Captions />
              </CaptionButtons>
            </AeroTitle>
            <Inner>
              <DetectorGrid>
                <ColHead $col={2}>Channel A</ColHead>
                <ColHead $col={4}>Channel B</ColHead>
                <RowLabel $row={2}>RMS  amplitude</RowLabel>
                <Readout $col={2} $row={2}>-39.985</Readout>
                <Readout $col={4} $row={2}>-43.641</Readout>
                <GridSelect $w={68} $row={2}>dBu<SelectArrow /></GridSelect>
                <RowLabel $row={4}>Frequency</RowLabel>
                <Readout $col={2} $row={4}>0.000</Readout>
                <Readout $col={4} $row={4}>999.995</Readout>
                <GridSelect $w={68} $row={4}>Hz<SelectArrow /></GridSelect>
                <RowLabel $row={6}>Inter-channel phase</RowLabel>
                <Readout $col={4} $row={6}>0.47</Readout>
                <GridSelect $w={68} $row={6}>degrees<SelectArrow /></GridSelect>
              </DetectorGrid>
            </Inner>
          </AeroWindow>

          <LegendWindow $x={16} $y={701} $w={237} $h={96}>
            <LegendTitle>
              Legend
              <LegendClose>x</LegendClose>
            </LegendTitle>
            <LegendBody>
              {legendRows.map((r) => (
                <LegendRow key={r.t}>
                  <LegendCheck>{r.on ? "✓" : ""}</LegendCheck>
                  <LegendLabel $sel={r.sel}>
                    <LegendIcon bg={r.bg} c={r.c} d={r.d} />
                    {r.t}
                  </LegendLabel>
                  <DocPair dim={!r.on} />
                </LegendRow>
              ))}
            </LegendBody>
          </LegendWindow>

          <AeroWindow $x={340} $y={4} $w={1536} $h={684}>
            <AeroTitle $h={31} $pad={9}>
              <svg width="16" height="16" viewBox="0 0 16 16">
                <rect width="16" height="16" fill="#4a5a3a" />
                <path d="M2 12 6 5l3 7 4-9" fill="none" stroke="#b06030" strokeWidth="1.5" />
              </svg>
              Trace window
              <CaptionButtons>
                <Captions />
              </CaptionButtons>
            </AeroTitle>
            <TraceToolbar>
              <TraceTools $pad={5}>
                <ToolStrip tools={traceTools} />
              </TraceTools>
            </TraceToolbar>
            <Plot>
              <Spectrum />
            </Plot>
            <PlotFooter>
              <CursorBar>
                <CursorTools>
                  X
                  <CursorValue $w={67}>1781.25</CursorValue>
                  <CursorSelect $w={73}>Hz<SelectArrow /></CursorSelect>
                  <CursorLetter>Y</CursorLetter>
                  <CursorValue $w={67}>-151.07</CursorValue>
                  <CursorSelect $w={74}>dBFS<SelectArrow /></CursorSelect>
                  <CursorSep $ml={5} />
                  <CursorCheck />
                  Relative
                  <CursorSep $ml={18} />
                  <ToolButton><Icon kind="crossL" /></ToolButton>
                  <ToolButton><Icon kind="crossR" /></ToolButton>
                  <ToolButton><Icon kind="crossB" /></ToolButton>
                  <ToolSep />
                  <ToolButton><Icon kind="crossUp" /></ToolButton>
                </CursorTools>
              </CursorBar>
            </PlotFooter>
          </AeroWindow>

          <FftReading x={425} y={711} w={319} h={151} frame="#c6abae" channel="A" value="118.1 dB" dispW={277} size={66} titleH={30} />
          <FftReading x={811} y={720} w={317} h={153} frame="#a80000" channel="B" value="118.2 dB" dispW={274} size={64} titleH={30} red />
        </Workspace>

        <StatusBar>
          <StatusHelp>For Help, press F1</StatusHelp>
          <StatusCell $w={18}><Icon kind="gauge" /></StatusCell>
          <StatusCell $w={18} $ml={0}><Icon kind="meter" /></StatusCell>
          <StatusBox $w={38} $ml={2} $fg="#999">S/card</StatusBox>
          <StatusBox $w={15} $ml={4}>➡</StatusBox>
          <StatusCell $w={54}>Bal/unbal</StatusCell>
          <StatusCell $w={49} $bg="#f01c1c" $fg="#b01010">XLR</StatusCell>
          <StatusCell $w={32} $ml={4} $bg="#f01c1c"><TinyAes>S/64<br />16</TinyAes></StatusCell>
          <StatusCell $w={13} $ml={4} $bg="#f01c1c" $fg="#b01010">CS</StatusCell>
          <StatusBox $w={53} $ml={5}>8</StatusBox>
          <StatusBox $w={54} $ml={4} />
          <PageTab $w={43} $bold>Page 1</PageTab>
          <PageTab $w={43} $bold>Page 2</PageTab>
          <PageTab $w={42} $bold>Page 3</PageTab>
          <PageTab $w={41}>Page 4</PageTab>
          <PageTab $w={41}>Page 5</PageTab>
        </StatusBar>
        <TaskStrip />
      </Screen>
    </>
  );
}
